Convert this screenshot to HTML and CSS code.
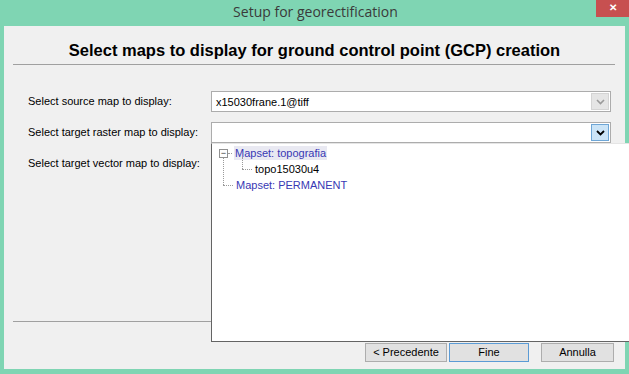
FILE: index.html
```html
<!DOCTYPE html>
<html>
<head>
  <title>Setup for georectification</title>
  <link rel="stylesheet" href="styles.css">
</head>
<body>
  <div class="titlebar">
    <div class="title">Setup for georectification</div>
    <div class="close">&#x2715;</div>
  </div>
  <div class="window">
    <div class="header">Select maps to display for ground control point (GCP) creation</div>
    <div class="line"></div>
    <div class="form">
      <div class="label">Select source map to display:</div>
      <div class="combo">
        <span class="value">x15030frane.1@tiff</span>
        <span class="arrow">
          <svg width="9" height="6" viewBox="0 0 9 6"><path d="M1 1 L4.5 4.5 L8 1" fill="none" stroke="#9a9a9a" stroke-width="1.6"/></svg>
        </span>
      </div>
      <div class="label">Select target raster map to display:</div>
      <div class="combo open">
        <span class="value"></span>
        <span class="arrow hot">
          <svg width="9" height="6" viewBox="0 0 9 6"><path d="M1 1 L4.5 4.5 L8 1" fill="none" stroke="#000" stroke-width="1.8"/></svg>
        </span>
        <div class="popup">
          <div class="node top">
            <span class="toggle">&minus;</span>
            <span class="dots-h short"></span>
            <span class="item sel">Mapset: topografia</span>
          </div>
          <div class="node child">
            <span class="dots-h"></span>
            <span class="item leaf">topo15030u4</span>
          </div>
          <div class="node last">
            <span class="dots-h"></span>
            <span class="item">Mapset: PERMANENT</span>
          </div>
        </div>
      </div>
      <div class="label">Select target vector map to display:</div>
      <div class="combo hidden"></div>
    </div>
    <div class="bottom-line"></div>
    <div class="buttons">
      <button class="btn">&lt; Precedente</button>
      <button class="btn default">Fine</button>
      <button class="btn cancel">Annulla</button>
    </div>
  </div>
</body>
</html>
```

FILE: styles.css
```css
body {
  margin: 0;
  background: #7fd5b3;
  font-family: "Liberation Sans", Arial, sans-serif;
  width: 629px;
  height: 374px;
  overflow: hidden;
}

.titlebar {
  height: 25px;
  display: flex;
  position: relative;
}

.title {
  flex: 1;
  text-align: center;
  font-family: "Open Sans", sans-serif;
  font-size: 14px;
  color: #3a3a3a;
  line-height: 24px;
  padding-left: 2px;
}

.close {
  position: absolute;
  top: 0;
  right: 0;
  width: 33px;
  height: 17px;
  background: #c75050;
  color: #fff;
  font-size: 10px;
  font-weight: bold;
  text-align: center;
  line-height: 16px;
}

.window {
  margin: 1px 4px 0 4px;
  height: 343px;
  background: #f0f0f0;
  position: relative;
}

.header {
  font-weight: bold;
  font-size: 16.5px;
  text-align: center;
  color: #000;
  padding-top: 15px;
  height: 23px;
}

.line {
  height: 1px;
  background: #a0a0a0;
  margin: 0 10px 0 9px;
}

.form {
  display: grid;
  grid-template-columns: 207px 400px;
  row-gap: 10px;
  padding: 26px 0 0 0;
}

.label {
  font-size: 11px;
  color: #000;
  padding-left: 24px;
  line-height: 21px;
}

.combo {
  height: 19px;
  border: 1px solid #acacac;
  background: #fff;
  display: flex;
  align-items: center;
  position: relative;
}

.combo.hidden {
  visibility: hidden;
}

.value {
  flex: 1;
  font-size: 11px;
  padding-left: 4px;
  color: #000;
}

.arrow {
  width: 16px;
  height: 15px;
  margin-right: 1px;
  background: #e5e5e5;
  border: 1px solid #d4d4d4;
  display: flex;
  align-items: center;
  justify-content: center;
}

.arrow.hot {
  background: #cbe4f7;
  border-color: #6ea6d6;
}

.popup {
  position: absolute;
  top: 20px;
  left: -1px;
  width: 430px;
  height: 199px;
  background: #fff;
  border-left: 1px solid #646464;
  border-bottom: 1px solid #646464;
  border-top: 1px solid #e5e5e5;
  padding-top: 1px;
  box-sizing: border-box;
  z-index: 2;
}

.node {
  height: 16px;
  display: flex;
  align-items: center;
  position: relative;
  font-size: 11px;
}

.node.top {
  padding-left: 7px;
}

.toggle {
  width: 7px;
  height: 7px;
  border: 1px solid #919191;
  font-size: 9px;
  line-height: 6px;
  text-align: center;
  color: #333;
  background: #fff;
}

.dots-h {
  width: 10px;
  border-top: 1px dotted #9a9a9a;
  margin-right: 2px;
}

.dots-h.short {
  width: 4px;
  margin-left: 0;
}

.node.child {
  padding-left: 30px;
}

.node.child::before {
  content: "";
  position: absolute;
  left: 30px;
  top: -4px;
  height: 12px;
  border-left: 1px dotted #9a9a9a;
}

.node.last {
  padding-left: 11px;
}

.node.top::after {
  content: "";
  position: absolute;
  left: 11px;
  top: 13px;
  height: 27px;
  border-left: 1px dotted #9a9a9a;
}

.item {
  color: #3838b4;
  padding: 0 1px;
  line-height: 14px;
}

.item.sel {
  background: #e9e9f2;
}

.item.leaf {
  color: #000;
}

.bottom-line {
  height: 1px;
  background: #a0a0a0;
  margin: 147px 0 0 9px;
  width: 200px;
}

.buttons {
  display: flex;
  justify-content: flex-end;
  padding: 21px 11px 0 0;
}

.btn {
  height: 19px;
  font-family: "Liberation Sans", Arial, sans-serif;
  font-size: 11px;
  background: #e1e1e1;
  border: 1px solid #adadad;
  padding: 0;
  width: 82px;
  line-height: 15px;
  color: #000;
}

.btn.default {
  width: 80px;
  margin-left: 2px;
  border-color: #5b9bd5;
}

.btn.cancel {
  width: 73px;
  margin-left: 12px;
}
```
